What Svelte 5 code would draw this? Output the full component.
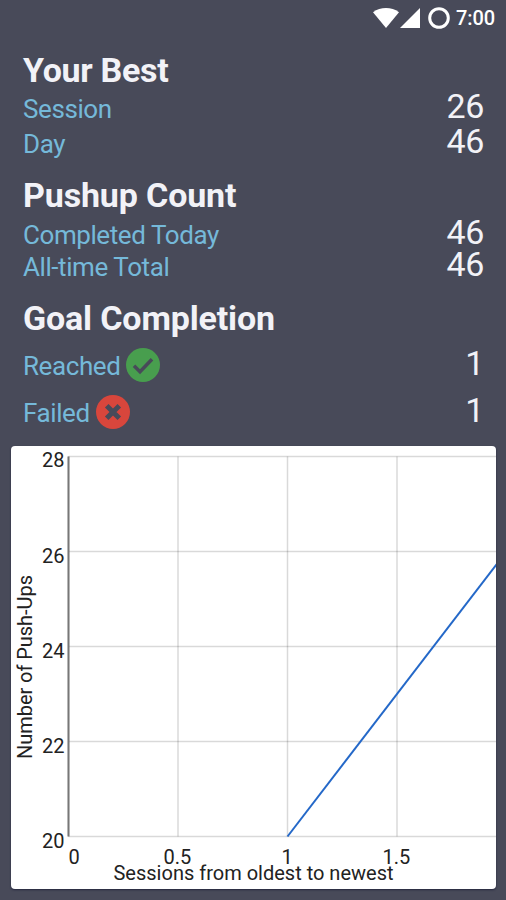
<script lang="ts">
	type Row = { label: string; value: number; icon?: 'check' | 'cross' };
	type Section = { title: string; kind: string; rows: Row[] };

	const sections: Section[] = [
		{
			title: 'Your Best',
			kind: 'best',
			rows: [
				{ label: 'Session', value: 26 },
				{ label: 'Day', value: 46 }
			]
		},
		{
			title: 'Pushup Count',
			kind: 'count',
			rows: [
				{ label: 'Completed Today', value: 46 },
				{ label: 'All-time Total', value: 46 }
			]
		},
		{
			title: 'Goal Completion',
			kind: 'goals',
			rows: [
				{ label: 'Reached', value: 1, icon: 'check' },
				{ label: 'Failed', value: 1, icon: 'cross' }
			]
		}
	];

	// chart
	const yTicks = [28, 26, 24, 22, 20];
	const xTicks = [0, 0.5, 1, 1.5];
	const points = [
		[1, 20],
		[2, 26]
	];

	const width = 485;
	const height = 443;
	const left = 57.5;
	const top = 10.5;
	const bottom = 390.5;

	const x = (v: number) => left + v * 219;
	const y = (v: number) => bottom - ((v - 20) / 8) * (bottom - top);

	const line = points.map(([px, py]) => `${x(px)},${y(py)}`).join(' ');
</script>

<div class="screen">
	<header class="status">
		<svg class="wifi" width="26" height="20" viewBox="0 0 26 20">
			<path d="M0 4.2C7.5-1.4 18.5-1.4 26 4.2L13 20z" />
		</svg>
		<svg class="signal" width="20" height="20" viewBox="0 0 20 20">
			<path d="M20 0v20H0z" />
		</svg>
		<svg class="battery" width="22" height="22" viewBox="0 0 22 22">
			<circle cx="11" cy="11" r="9.3" />
		</svg>
		<span class="time">7:00</span>
	</header>

	<main>
		{#each sections as section}
			<section class={section.kind}>
				<h2>{section.title}</h2>
				{#each section.rows as row}
					<div class="row">
						<span class="label">{row.label}</span>
						{#if row.icon}
							<svg class="icon {row.icon}" width="34" height="34" viewBox="0 0 34 34">
								<circle cx="17" cy="17" r="17" />
								{#if row.icon === 'check'}
									<path d="M8 17.8l6 6L26 11.2" />
								{:else}
									<path d="M10.7 10.7l12.6 12.6M23.3 10.7L10.7 23.3" />
								{/if}
							</svg>
						{/if}
						<span class="value">{row.value}</span>
					</div>
				{/each}
			</section>
		{/each}
	</main>

	<div class="card">
		<svg {width} {height} viewBox="0 0 {width} {height}">
			{#each yTicks as tick}
				<line class="grid" x1={left} x2={width} y1={y(tick)} y2={y(tick)} />
				<text class="tick" x="53.5" y={y(tick) + (tick === 28 ? 10 : 11)} text-anchor="end">{tick}</text>
			{/each}
			{#each xTicks as tick}
				<line class="grid" x1={x(tick)} x2={x(tick)} y1={top} y2={bottom} />
				<text class="tick" x={tick === 0 ? 63 : x(tick) - 0.5} y="417.5" text-anchor="middle">{tick}</text>
			{/each}
			<line class="axis" x1={left} x2={left} y1={top} y2={bottom} />
			<polyline class="series" points={line} />
			<text class="title" x="242.5" y="434" text-anchor="middle" textLength="280">Sessions from oldest to newest</text>
			<text class="title" transform="translate(21 221) rotate(-90)" text-anchor="middle" textLength="184">Number of Push-Ups</text>
		</svg>
	</div>
</div>

<style>
	:global(body) {
		background: #484a59;
	}

	.screen {
		box-sizing: border-box;
		width: 506px;
		height: 900px;
		overflow: hidden;
		background: #484a59;
		font-family: Roboto, sans-serif;
	}

	.status {
		display: flex;
		align-items: center;
		justify-content: flex-end;
		height: 35px;
		padding-right: 11px;
	}

	.status svg {
		fill: #fff;
	}

	.signal {
		margin-left: 1px;
	}

	.status .battery {
		margin-left: 8px;
		fill: none;
		stroke: #fff;
		stroke-width: 3;
	}

	.time {
		margin-left: 6px;
		padding-top: 1px;
		color: #fff;
		font-size: 20px;
		font-weight: 500;
		line-height: 35px;
		letter-spacing: -0.1px;
	}

	main {
		height: 411px;
		padding: 15px 22px 0 23px;
		box-sizing: border-box;
	}

	h2 {
		margin: 0;
		color: #f2f2f7;
		font-size: 34px;
		font-weight: 700;
		line-height: 40px;
		letter-spacing: -0.15px;
	}

	.row {
		display: flex;
		height: 35px;
		line-height: 34px;
	}

	.best {
		margin-bottom: 15px;
	}

	.best h2 {
		letter-spacing: -0.3px;
	}

	.count {
		margin-bottom: 18px;
	}

	.count h2 {
		margin-bottom: 1px;
	}

	.count .row {
		height: 32px;
	}

	.goals h2 {
		margin-bottom: 3px;
	}

	.goals .row {
		align-items: center;
		height: 47px;
	}

	.label {
		padding-top: 2px;
		color: #75b9d9;
		font-size: 26px;
		letter-spacing: -0.42px;
	}

	.value {
		margin: -1px 0 0 auto;
		color: #f2f2f7;
		font-size: 34px;
		letter-spacing: -0.3px;
	}

	.goals .value {
		margin-top: -3px;
	}

	.icon {
		margin-left: 6px;
	}

	.icon path {
		fill: none;
		stroke: #484a59;
		stroke-width: 3.5;
	}

	.check circle {
		fill: #489e4e;
	}

	.cross circle {
		fill: #d8463c;
	}

	.cross path {
		stroke-width: 5;
	}

	.card {
		width: 485px;
		height: 443px;
		margin-left: 11px;
		overflow: hidden;
		border-radius: 4px;
		background: #fff;
		box-shadow: 0 1px 2px #24263e;
	}

	.card svg {
		display: block;
	}

	.grid {
		stroke: #000;
		stroke-opacity: 0.15;
		stroke-width: 1.5;
	}

	.axis {
		stroke: #777;
		stroke-width: 2;
	}

	.series {
		fill: none;
		stroke: #2468c8;
		stroke-width: 2;
	}

	.tick,
	.title {
		fill: #222;
		font-size: 20px;
	}
</style>
